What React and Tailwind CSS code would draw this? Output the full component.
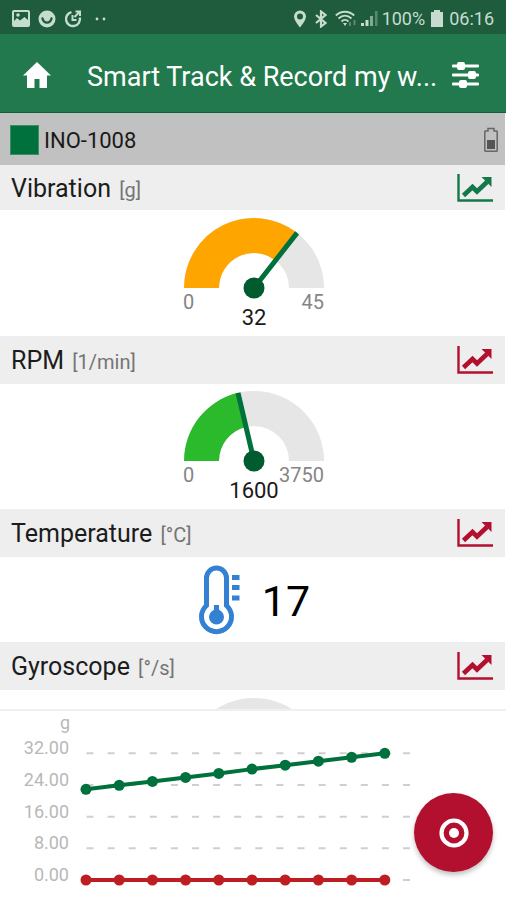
import clsx from 'clsx'

const GREEN = '#00703c'

const samples = [22.9, 23.9, 24.9, 25.9, 26.9, 28, 29, 30, 31, 32]

function StatusBar() {
  return (
    <div className="flex h-[34px] items-center justify-between bg-[#1e5c3d] px-3 pt-1 text-[#c5dccf]">
      <div className="flex items-center gap-2">
        <svg width="18" height="18" viewBox="0 0 18 18" aria-hidden="true">
          <rect x="1" y="1" width="16" height="15" rx="1" fill="none" stroke="currentColor" strokeWidth="2" />
          <path d="M2 15V11l3-3 3 2.500L12.500 7 16 10v5z" fill="currentColor" />
          <circle cx="6" cy="5" r="1.800" fill="currentColor" />
        </svg>
        <svg width="18" height="18" viewBox="0 0 18 18" aria-hidden="true">
          <circle cx="9" cy="9" r="8.5" fill="currentColor" />
          <path d="M4.5 8.500c1.500 5.500 7.500 5.500 9 0" fill="none" stroke="#1e5c3d" strokeWidth="2.400" strokeLinecap="round" />
        </svg>
        <svg width="18" height="18" viewBox="0 0 18 18" aria-hidden="true" fill="none" stroke="currentColor">
          <path d="M7.500 2.200a7 7 0 1 0 8.300 5.300" strokeWidth="2.400" />
          <path d="M8.500 5v5h4" strokeWidth="2" />
          <path d="M10.500 7L16 1.500M11.500 1.500H16V6" strokeWidth="2" />
        </svg>
        <svg width="14" height="18" viewBox="0 0 14 18" className="ml-1" aria-hidden="true">
          <circle cx="3" cy="9" r="1.400" fill="currentColor" />
          <circle cx="10" cy="9" r="1.400" fill="currentColor" />
        </svg>
      </div>
      <div className="flex items-center text-[18px] leading-5">
        <svg width="14" height="18" viewBox="0 0 14 18" className="mr-2" aria-hidden="true">
          <path
            fillRule="evenodd"
            fill="currentColor"
            d="M7 .5a6 6 0 0 0-6 6c0 4 6 11 6 11s6-7 6-11a6 6 0 0 0-6-6zm0 3a3 3 0 1 1 0 6 3 3 0 0 1 0-6z"
          />
        </svg>
        <svg width="12" height="18" viewBox="0 0 12 18" className="mr-2" aria-hidden="true">
          <path d="M1 5l9.500 8L6 16.500v-15L10.500 5 1 13" fill="none" stroke="currentColor" strokeWidth="2.200" />
        </svg>
        <svg width="22" height="18" viewBox="0 0 22 18" className="mr-1" aria-hidden="true" fill="none" stroke="currentColor" strokeWidth="1.800">
          <path d="M.8 5.500C6 .5 14 .5 19.200 5.500M3.500 8.500c4-3.700 9-3.700 13 0M6.500 11.500c2-2 5-2 7 0" />
          <path d="M8 13h4l-2 3z" fill="currentColor" stroke="none" />
          <path d="M15 12v4M19.500 10v5" opacity="0.4" />
        </svg>
        <svg width="17" height="18" viewBox="0 0 17 18" className="mr-1" aria-hidden="true" fill="currentColor">
          <rect x="0" y="13" width="3" height="3" />
          <rect x="4.500" y="10" width="3" height="6" />
          <rect x="9" y="6" width="3" height="10" opacity="0.6" />
          <rect x="14" y="1" width="2.500" height="15" opacity="0.35" />
        </svg>
        <span>100%</span>
        <svg width="12" height="18" viewBox="0 0 12 18" className="mx-1.5" aria-hidden="true">
          <path d="M3 0h6v2h3v15H0V2h3z" fill="currentColor" />
        </svg>
        <span>06:16</span>
      </div>
    </div>
  )
}

function AppHeader() {
  return (
    <header className="flex h-[79px] items-center border-b border-[#0c6238] bg-[#21794d] pt-1 pr-[26px] pl-[23px] text-white">
      <button className="shrink-0 cursor-pointer" aria-label="Home">
        <svg width="28" height="26" viewBox="0 0 28 26" fill="currentColor">
          <path d="M14 0L0 13.500h4V26h7.500v-9h5v9H24V13.500h4z" />
        </svg>
      </button>
      <h1 className="ml-9 min-w-0 flex-1 truncate pt-1 text-[27px] leading-8">Smart Track &amp; Record my w...</h1>
      <button className="ml-2 shrink-0 cursor-pointer" aria-label="Settings">
        <svg width="29" height="26" viewBox="0 0 29 26" fill="currentColor">
          <rect y="2.500" x="1" width="27" height="3" rx="1" />
          <rect y="11.500" x="1" width="27" height="3" rx="1" />
          <rect y="20.500" x="1" width="27" height="3" rx="1" />
          <rect x="6" y="0" width="8" height="8" rx="2" />
          <rect x="17" y="9" width="8" height="8" rx="2" />
          <rect x="8" y="18" width="8" height="8" rx="2" />
        </svg>
      </button>
    </header>
  )
}

function DeviceBar() {
  return (
    <div className="flex h-[52px] items-center bg-[#c1c1c1] pt-0.5 pr-[7px] pl-[10px]">
      <span className="h-[30px] w-[29px] border border-[#3c8f62] bg-[#00703c]" />
      <span className="ml-[5px] pt-0.5 text-[22px] leading-7 text-[#1a1a1a]">INO-1008</span>
      <svg width="14" height="26" viewBox="0 0 14 26" className="ml-auto" role="img" aria-label="Battery">
        <path
          d="M4 1.500h6V4h2.500q.7 0 .7.700V23.500q0 .8-.7.800h-11q-.7 0-.7-.8V4.700Q.8 4 1.500 4H4z"
          fill="none"
          stroke="#666"
          strokeWidth="1.500"
        />
        <rect x="3" y="13" width="8" height="9" fill="#555" />
      </svg>
    </div>
  )
}

function TrendButton({ active, label }) {
  return (
    <button
      className={clsx('shrink-0 cursor-pointer', active ? 'text-[#14794a]' : 'text-[#b3102f]')}
      aria-label={`Show ${label} in chart`}
    >
      <svg width="36" height="28" viewBox="0 0 36 28" fill="none" stroke="currentColor">
        <path d="M1.500 0v26.500H36" strokeWidth="2.400" />
        <path d="M6.500 21.500l9-8.500 4.500 4.500L30 8" strokeWidth="4.600" />
        <path d="M24.500 3h10v10l-3-3-4.500-4.500z" fill="currentColor" stroke="none" />
      </svg>
    </button>
  )
}

function Section({ title, unit, active, className = 'h-12', children }) {
  return (
    <section>
      <div className={clsx('flex items-center justify-between bg-[#eeeeee] pr-3 pl-[11px]', className)}>
        <h2 className="pt-[3px] text-[25px] leading-8 text-[#1c1c1c]">
          {title} <span className="ml-0.5 text-[20px] text-[#757575]">[{unit}]</span>
        </h2>
        <TrendButton active={active} label={title} />
      </div>
      {children}
    </section>
  )
}

// half-circle gauge, angle 0 is on the left
function Gauge({ value, max, color }) {
  const angle = Math.PI * (1 - value / max)
  const at = (r) => `${71 + r * Math.cos(angle)} ${71 - r * Math.sin(angle)}`

  return (
    <svg width="142" height="116" viewBox="0 0 142 116" role="img" aria-label={`${value} of ${max}`}>
      <path d="M1 71A70 70 0 0 1 141 71H106A35 35 0 0 0 36 71z" fill="#e6e6e6" />
      <path d={`M1 71A70 70 0 0 1 ${at(70)}L${at(35)}A35 35 0 0 0 36 71z`} fill={color} />
      <path d={`M71 71L${at(70)}`} stroke={GREEN} strokeWidth="5" />
      <circle cx="71" cy="71" r="10.500" fill="#005c2e" />
      <text x="0" y="92" fontSize="20" fill="#858585">0</text>
      <text x="141" y="92" fontSize="20" fill="#858585" textAnchor="end">{max}</text>
      <text x="71" y="108" fontSize="22" fill="#1a1a1a" textAnchor="middle">{value}</text>
    </svg>
  )
}

// track only, for a sensor without a reading yet
function EmptyGauge() {
  return (
    <svg width="142" height="116" viewBox="0 0 142 116" aria-hidden="true">
      <path d="M1 71A70 70 0 0 1 141 71H106A35 35 0 0 0 36 71z" fill="#e6e6e6" />
    </svg>
  )
}

function Thermometer() {
  return (
    <svg width="42" height="72" viewBox="0 0 42 72" aria-hidden="true">
      <path
        d="M8.500 41.500V14a10 10 0 0 1 20 0V41.500A15 15 0 1 1 8.500 41.500z"
        fill="none"
        stroke="#3480d3"
        strokeWidth="5"
      />
      <circle cx="18.500" cy="53" r="7.500" fill="#3480d3" />
      <rect x="16" y="41" width="5" height="8" fill="#3480d3" />
      <path d="M34 13.500h7.500M34 23.500h7.500M34 34h7.500" stroke="#3480d3" strokeWidth="5" />
    </svg>
  )
}

function Series({ values, color }) {
  const points = values.map((v, i) => [86 + i * 33.2, 169 - v * 3.96])
  return (
    <g>
      <polyline points={points.map((p) => p.join(',')).join(' ')} fill="none" stroke={color} strokeWidth="4" />
      {points.map(([x, y]) => (
        <circle key={x} cx={x} cy={y} r="5.500" fill={color} />
      ))}
    </g>
  )
}

function LiveChart() {
  return (
    <svg viewBox="0 0 506 189" className="block w-full" role="img" aria-label="Vibration over time">
      <text x="70" y="18" fontSize="18" fill="#b8b8b8" textAnchor="end">g</text>
      {[32, 24, 16, 8, 0].map((v) => {
        const y = 169 - v * 3.96
        return (
          <g key={v}>
            <path d={`M86.500 ${y}H411`} stroke="#cfcfcf" strokeWidth="2" strokeDasharray="7 14.1" />
            <text x="69" y={y + 1} fontSize="18" fill="#b8b8b8" textAnchor="end">{v.toFixed(2)}</text>
          </g>
        )
      })}
      <Series values={samples} color="#00703c" />
      <Series values={samples.map(() => 0)} color="#be1e22" />
    </svg>
  )
}

export default function App() {
  return (
    <div className="flex h-screen flex-col bg-white font-['Roboto',sans-serif]">
      <StatusBar />
      <AppHeader />

      <main className="mr-px min-h-0 flex-1 overflow-hidden">
        <DeviceBar />
        <Section title="Vibration" unit="g" active className="h-[45px]">
          <div className="flex justify-center pt-[7px] pb-[3px] pl-[3px]">
            <Gauge value={32} max={45} color="#ffa500" />
          </div>
        </Section>
        <Section title="RPM" unit="1/min">
          <div className="flex justify-center pt-[6px] pb-[3px] pl-[3px]">
            <Gauge value={1600} max={3750} color="#2aba2c" />
          </div>
        </Section>
        <Section title="Temperature" unit="°C">
          <div className="flex h-[85px] items-center justify-center gap-[22px] pl-[3px]">
            <Thermometer />
            <span className="pt-0.5 text-[43px] leading-[48px] text-black">17</span>
          </div>
        </Section>
        <Section title="Gyroscope" unit="°/s">
          <div className="flex justify-center pt-[7px] pl-[3px]">
            <EmptyGauge />
          </div>
        </Section>
      </main>

      <div className="relative shrink-0 border-t-2 border-[#efefef] bg-white">
        <LiveChart />
        <button
          className="absolute right-[13px] bottom-7 flex size-[79px] cursor-pointer items-center justify-center rounded-full bg-[#b3102f] text-white shadow-[0_3px_5px_rgba(0,0,0,0.25)]"
          aria-label="Record"
        >
          <svg width="30" height="30" viewBox="0 0 30 30">
            <circle cx="15" cy="15" r="12.500" fill="none" stroke="currentColor" strokeWidth="4.200" />
            <circle cx="15" cy="15" r="5" fill="currentColor" />
          </svg>
        </button>
      </div>
    </div>
  )
}
